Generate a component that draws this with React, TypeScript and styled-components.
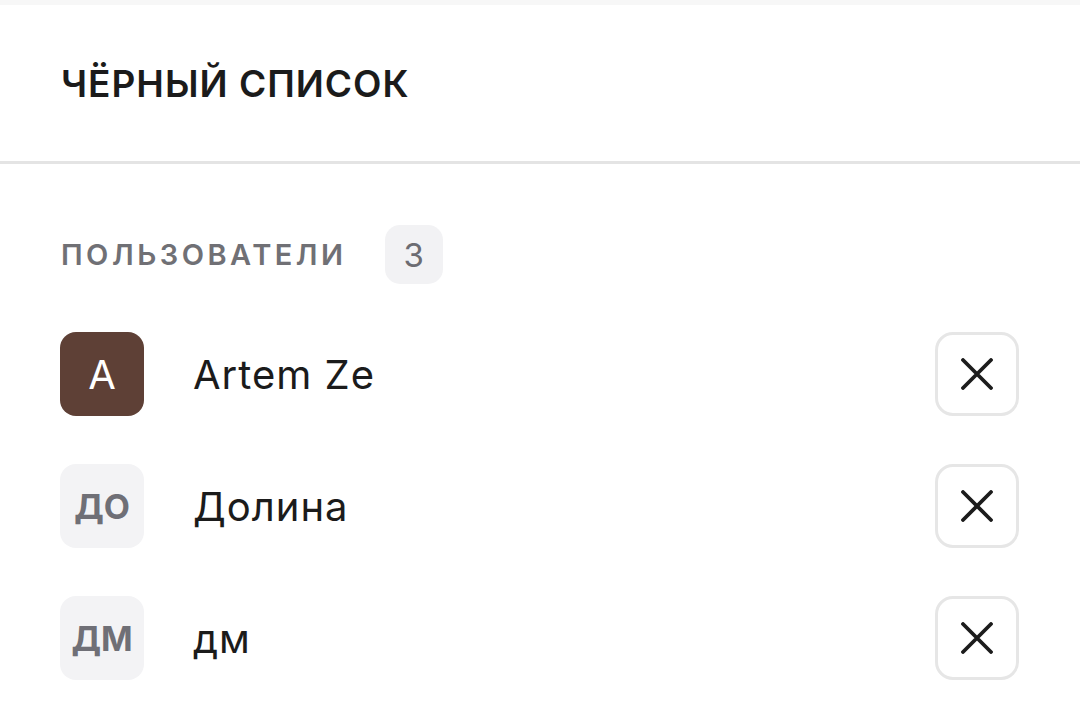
import React from "react";
import styled, { createGlobalStyle } from "styled-components";

const Global = createGlobalStyle`
  html, body { margin: 0; padding: 0; background: #ffffff; }
  body { font-family: Inter, "Noto Sans", sans-serif; -webkit-font-smoothing: antialiased; }
`;

const Page = styled.div`
  width: 1080px;
  height: 728px;
  background: #ffffff;
  display: flex;
  flex-direction: column;
  overflow: hidden;
`;

const TopStrip = styled.div`
  height: 5px;
  background: #f7f7f7;
`;

const Header = styled.header`
  display: flex;
  align-items: center;
  padding: 0 61px;
  border-bottom: 3px solid #e4e4e4;
  box-sizing: border-box;
  height: 159px;
`;

const Title = styled.h1`
  margin: 0;
  font-size: 37px;
  font-weight: 600;
  letter-spacing: 1px;
  color: #1b1b1b;
  line-height: 1;
`;

const Section = styled.section`
  padding: 61px 60px 0 60px;
  display: flex;
  flex-direction: column;
`;

const SectionHead = styled.div`
  display: flex;
  align-items: center;
  gap: 38px;
  margin-bottom: 48px;
`;

const SectionLabel = styled.span`
  font-size: 29px;
  font-weight: 600;
  letter-spacing: 3.5px;
  color: #707075;
  padding-left: 1px;
`;

const Badge = styled.span`
  width: 58px;
  height: 59px;
  border-radius: 15px;
  background: #f2f2f4;
  color: #6c6c72;
  font-size: 33px;
  display: flex;
  align-items: center;
  justify-content: center;
`;

const List = styled.div`
  display: flex;
  flex-direction: column;
  gap: 48px;
`;

const Row = styled.div`
  display: flex;
  align-items: center;
  height: 84px;
`;

const Avatar = styled.div<{ $photo?: boolean }>`
  width: 84px;
  height: 84px;
  border-radius: 16px;
  flex-shrink: 0;
  display: flex;
  align-items: center;
  justify-content: center;
  background: ${(p) => (p.$photo ? "#5e4036" : "#f3f3f5")};
  color: ${(p) => (p.$photo ? "#ffffff" : "#6f6f76")};
  font-size: ${(p) => (p.$photo ? "40px" : "34px")};
  font-weight: ${(p) => (p.$photo ? 400 : 700)};
`;

const Name = styled.span`
  flex: 1;
  margin-left: 49px;
  font-size: 40px;
  letter-spacing: 1px;
  color: #1b1b1b;
  font-weight: 400;
`;

const RemoveButton = styled.button`
  width: 84px;
  height: 84px;
  box-sizing: border-box;
  border: 3px solid #e6e6e6;
  border-radius: 18px;
  background: #ffffff;
  display: flex;
  align-items: center;
  justify-content: center;
  padding: 0;
  margin-right: 1px;
  cursor: pointer;
`;

const CloseIcon = () => (
  <svg width="32" height="32" viewBox="0 0 32 32" fill="none">
    <path d="M2 2 L30 30 M30 2 L2 30" stroke="#1c1c1c" strokeWidth="3.8" strokeLinecap="round" />
  </svg>
);

const users = [
  { initials: "A", name: "Artem Ze", photo: true },
  { initials: "ДО", name: "Долина", photo: false },
  { initials: "ДМ", name: "дм", photo: false },
];

export default function App() {
  return (
    <Page>
      <Global />
      <TopStrip />
      <Header>
        <Title>ЧЁРНЫЙ СПИСОК</Title>
      </Header>
      <Section>
        <SectionHead>
          <SectionLabel>ПОЛЬЗОВАТЕЛИ</SectionLabel>
          <Badge>3</Badge>
        </SectionHead>
        <List>
          {users.map((u) => (
            <Row key={u.name}>
              <Avatar $photo={u.photo}>{u.initials}</Avatar>
              <Name>{u.name}</Name>
              <RemoveButton aria-label="Удалить">
                <CloseIcon />
              </RemoveButton>
            </Row>
          ))}
        </List>
      </Section>
    </Page>
  );
}
